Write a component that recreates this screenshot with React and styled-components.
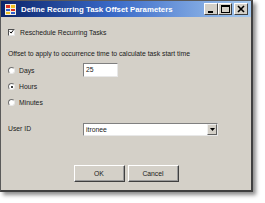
import styled, { createGlobalStyle } from "styled-components";

const GlobalStyle = createGlobalStyle`
  body {
    margin: 0;
    background: #ffffff;
    font-family: "Liberation Sans", Arial, sans-serif;
  }
`;

export default function App() {
  return (
    <>
      <GlobalStyle />
      <Page>
        <Window>
          <TitleBar>
            <AppIcon>
              <svg width="11" height="11" viewBox="0 0 11 11">
                <rect x="0" y="0" width="11" height="11" fill="#f4f0e0" />
                <rect x="1" y="1" width="4" height="3" fill="#d83020" />
                <rect x="6" y="1" width="4" height="3" fill="#f0c020" />
                <rect x="1" y="5" width="4" height="2" fill="#3060d0" />
                <rect x="6" y="5" width="4" height="2" fill="#d83020" />
                <rect x="1" y="8" width="4" height="2" fill="#f0c020" />
                <rect x="6" y="8" width="4" height="2" fill="#3060d0" />
              </svg>
            </AppIcon>
            <TitleText>Define Recurring Task Offset Parameters</TitleText>
            <CaptionButtons>
              <CaptionButton>
                <svg width="7" height="7" viewBox="0 0 7 7">
                  <rect x="0" y="5" width="5" height="2" fill="#000" />
                </svg>
              </CaptionButton>
              <CaptionButton>
                <svg width="9" height="8" viewBox="0 0 9 8">
                  <rect x="0.5" y="0.5" width="8" height="7" fill="none" stroke="#000" />
                  <rect x="0" y="0" width="9" height="2" fill="#000" />
                </svg>
              </CaptionButton>
              <CaptionButton $gap>
                <svg width="8" height="8" viewBox="0 0 8 8">
                  <path d="M1 1 L7 7 M7 1 L1 7" stroke="#000" strokeWidth="1.6" />
                </svg>
              </CaptionButton>
            </CaptionButtons>
          </TitleBar>

          <Body>
            <CheckRow>
              <CheckBox>
                <svg width="7" height="7" viewBox="0 0 7 7">
                  <path d="M1 3 L3 5 L6 1" stroke="#000" strokeWidth="1.4" fill="none" />
                </svg>
              </CheckBox>
              <Label>Reschedule Recurring Tasks</Label>
            </CheckRow>

            <Caption>Offset to apply to occurrence time to calculate task start time</Caption>

            <Options>
              <OptionRow>
                <RadioGroup>
                  <Radio />
                  <Label>Days</Label>
                </RadioGroup>
                <TextField>25</TextField>
              </OptionRow>
              <OptionRow>
                <RadioGroup>
                  <Radio $checked />
                  <Label>Hours</Label>
                </RadioGroup>
              </OptionRow>
              <OptionRow>
                <RadioGroup>
                  <Radio />
                  <Label>Minutes</Label>
                </RadioGroup>
              </OptionRow>
            </Options>

            <UserRow>
              <FieldLabel>User ID</FieldLabel>
              <Select>
                <SelectValue>itronee</SelectValue>
                <SelectArrow>
                  <svg width="5" height="3" viewBox="0 0 5 3">
                    <path d="M0 0 H5 L2.5 3 Z" fill="#000" />
                  </svg>
                </SelectArrow>
              </Select>
            </UserRow>

            <Buttons>
              <Button>OK</Button>
              <Button>Cancel</Button>
            </Buttons>
          </Body>
        </Window>
      </Page>
    </>
  );
}

const Page = styled.div`
  width: 265px;
  height: 203px;
`;

const Window = styled.div`
  width: 253px;
  height: 192px;
  box-sizing: border-box;
  background: #d4d0c8;
  border: 1px solid #5a5a5a;
  border-right: 2px solid #404040;
  border-bottom: 2px solid #404040;
  box-shadow: 3px 3px 4px rgba(0, 0, 0, 0.45);
  display: flex;
  flex-direction: column;
`;

const TitleBar = styled.div`
  height: 16px;
  background: linear-gradient(to right, #0a246a 0%, #3a6ac8 45%, #a6caf0 100%);
  display: flex;
  align-items: center;
  padding-left: 4px;
`;

const AppIcon = styled.div`
  width: 11px;
  height: 11px;
  display: flex;
  margin-right: 5px;
`;

const TitleText = styled.div`
  color: #ffffff;
  font-weight: bold;
  font-size: 7.8px;
  white-space: nowrap;
  flex: 1;
`;

const CaptionButtons = styled.div`
  display: flex;
  align-items: center;
  margin-right: 3px;
`;

const CaptionButton = styled.div`
  width: 14px;
  height: 12px;
  box-sizing: border-box;
  background: #d4d0c8;
  border: 1px solid;
  border-color: #ffffff #404040 #404040 #ffffff;
  display: flex;
  align-items: center;
  justify-content: center;
  margin-left: ${(p) => (p.$gap ? "2px" : "0")};
`;

const Body = styled.div`
  flex: 1;
  display: flex;
  flex-direction: column;
  padding: 10px 0 0 7px;
  font-size: 6.8px;
  color: #202020;
`;

const CheckRow = styled.div`
  display: flex;
  align-items: center;
  height: 10px;
`;

const CheckBox = styled.div`
  width: 7px;
  height: 7px;
  box-sizing: border-box;
  background: #fff;
  border: 1px solid;
  border-color: #505050 #e0e0e0 #e0e0e0 #505050;
  display: flex;
  align-items: center;
  justify-content: center;
  margin-right: 5px;

  svg {
    width: 6px;
    height: 6px;
  }
`;

const Label = styled.span`
  white-space: nowrap;
`;

const Caption = styled.div`
  margin-top: 12px;
  height: 10px;
  line-height: 10px;
  white-space: nowrap;
`;

const Options = styled.div`
  display: flex;
  flex-direction: column;
  gap: 1px;
  margin-top: 3px;
`;

const OptionRow = styled.div`
  display: flex;
  align-items: center;
  height: 15px;
`;

const RadioGroup = styled.div`
  display: flex;
  align-items: center;
  width: 75px;
  padding-top: 2px;
`;

const Radio = styled.span`
  width: 7px;
  height: 7px;
  box-sizing: border-box;
  border-radius: 50%;
  background: #fff;
  border: 1px solid;
  border-color: #707070 #e8e8e8 #e8e8e8 #707070;
  margin-right: 4px;
  position: relative;

  &::after {
    content: "";
    display: ${(p) => (p.$checked ? "block" : "none")};
    position: absolute;
    left: 1.5px;
    top: 1.5px;
    width: 2px;
    height: 2px;
    border-radius: 50%;
    background: #000;
  }
`;

const TextField = styled.div`
  width: 35px;
  height: 14px;
  box-sizing: border-box;
  background: #fff;
  border: 1px solid;
  border-color: #808080 #e8e8e8 #e8e8e8 #808080;
  padding-left: 2px;
  line-height: 12px;
`;

const UserRow = styled.div`
  display: flex;
  align-items: center;
  height: 13px;
  margin-top: 14px;
`;

const FieldLabel = styled.span`
  width: 75px;
  white-space: nowrap;
  margin-top: -2px;
`;

const Select = styled.div`
  width: 135px;
  height: 13px;
  box-sizing: border-box;
  background: #fff;
  border: 1px solid;
  border-color: #808080 #e8e8e8 #e8e8e8 #808080;
  display: flex;
  align-items: center;
  justify-content: space-between;
`;

const SelectValue = styled.span`
  padding-left: 2px;
`;

const SelectArrow = styled.div`
  width: 10px;
  height: 11px;
  box-sizing: border-box;
  background: #d4d0c8;
  border: 1px solid;
  border-color: #f0f0f0 #606060 #606060 #f0f0f0;
  display: flex;
  align-items: center;
  justify-content: center;
`;

const Buttons = styled.div`
  display: flex;
  justify-content: center;
  gap: 3px;
  margin-top: 29px;
  margin-left: -7px;
`;

const Button = styled.div`
  width: 51px;
  height: 17px;
  box-sizing: border-box;
  background: #d4d0c8;
  border: 1px solid;
  border-color: #ffffff #404040 #404040 #ffffff;
  box-shadow: inset -1px -1px 0 #9a9a9a;
  display: flex;
  align-items: center;
  justify-content: center;
`;
